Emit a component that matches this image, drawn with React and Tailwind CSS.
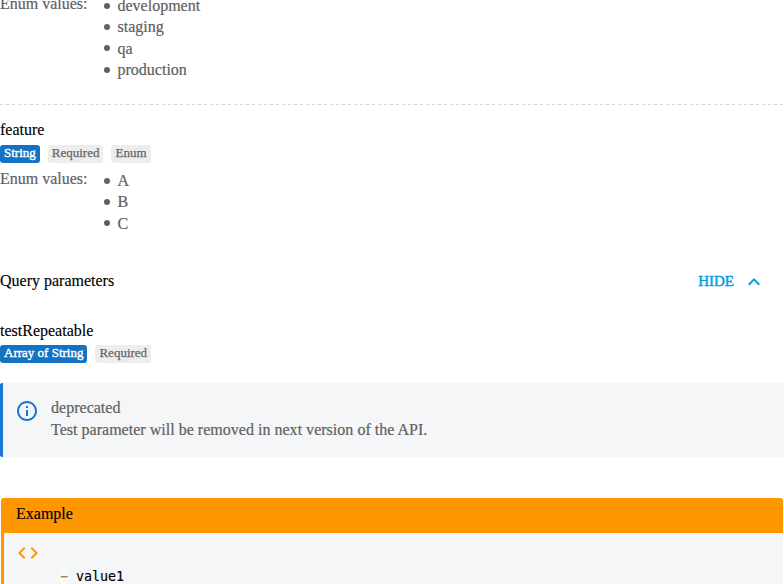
import { MdCode, MdInfoOutline, MdKeyboardArrowUp } from 'react-icons/md';

function Badge({ primary, children }) {
  return (
    <span
      className={
        'h-[18px] rounded-[3px] px-1 text-[13px] leading-[16px] ' +
        (primary
          ? 'bg-[#1272c3] text-white [-webkit-text-stroke:0.4px]'
          : 'bg-[#ededed] text-[#666] [-webkit-text-stroke:0.25px]')
      }
    >
      {children}
    </span>
  );
}

function EnumValues({ values, className }) {
  return (
    <div className="flex text-[#606060] [-webkit-text-stroke:0.2px]">
      <div className="w-[103px] leading-[18px]">Enum values:</div>
      <ul className={className}>
        {values.map((value) => (
          <li key={value} className="flex h-[21.4px] items-center leading-[21.4px]">
            <span className="mr-[7.5px] ml-px size-[6px] rounded-full bg-[#606060]" />
            {value}
          </li>
        ))}
      </ul>
    </div>
  );
}

export default function App() {
  return (
    <div className="h-[584px] w-[784px] overflow-hidden bg-white font-['Liberation_Serif',serif] text-[16px] text-black">
      <section className="-mt-[5px] h-[109px]">
        <EnumValues values={['development', 'staging', 'qa', 'production']} />
      </section>
      <div className="h-px bg-[repeating-linear-gradient(90deg,#cfd6d9_0_3px,transparent_3px_6px)]" />
      <section className="h-[142px] pt-4">
        <div className="h-[24px] leading-[18px] [-webkit-text-stroke:0.15px]">feature</div>
        <div className="mb-[7px] flex h-[18px] gap-2">
          <Badge primary>String</Badge>
          <Badge>Required</Badge>
          <Badge>Enum</Badge>
        </div>
        <EnumValues values={['A', 'B', 'C']} />
      </section>
      <header className="flex h-[68px] items-center justify-between pr-[18px]">
        <span className="[-webkit-text-stroke:0.15px]">Query parameters</span>
        <button className="mt-px flex items-center gap-2 text-[15px] leading-[18px] text-[#009fdb] [-webkit-text-stroke:0.5px]">
          <span className="-mt-[2px]">HIDE</span>
          <MdKeyboardArrowUp className="size-6" strokeWidth="0" />
        </button>
      </header>
      <section className="mt-[7px] h-[61px]">
        <div className="h-[23px] leading-[18px] [-webkit-text-stroke:0.15px]">testRepeatable</div>
        <div className="flex h-[18px] gap-2">
          <Badge primary>Array of String</Badge>
          <Badge>Required</Badge>
        </div>
      </section>
      <aside className="flex h-[74px] rounded-[2px] border-l-[3px] border-[#1976d2] bg-[#f5f6f8] pt-4 pl-3">
        <MdInfoOutline className="size-6 text-[#1976d2]" />
        <div className="ml-3 -mt-[2px] leading-[22px] tracking-[0.02px] text-[#606060] [-webkit-text-stroke:0.2px]">
          <p>deprecated</p>
          <p>Test parameter will be removed in next version of the API.</p>
        </div>
      </aside>
      <section className="mt-[41px] mr-px ml-px h-[100px] overflow-hidden rounded-[3px] bg-[#f5f6f8]">
        <div className="h-[35px] bg-[#ff9800] pl-[15px] leading-[32px] [-webkit-text-stroke:0.15px]">Example</div>
        <div className="h-[65px] border-l-[3px] border-[#ff9800] pt-2 pl-3">
          <MdCode className="size-6 text-[#ff9800]" />
          <pre className="mt-px ml-11 font-['DejaVu_Sans_Mono',monospace] text-[13.3px] leading-[22px] [-webkit-text-stroke:0.15px]">
            <span className="bg-[#fafafb] text-[#a67f59]">−</span> value1
          </pre>
        </div>
      </section>
    </div>
  );
}
